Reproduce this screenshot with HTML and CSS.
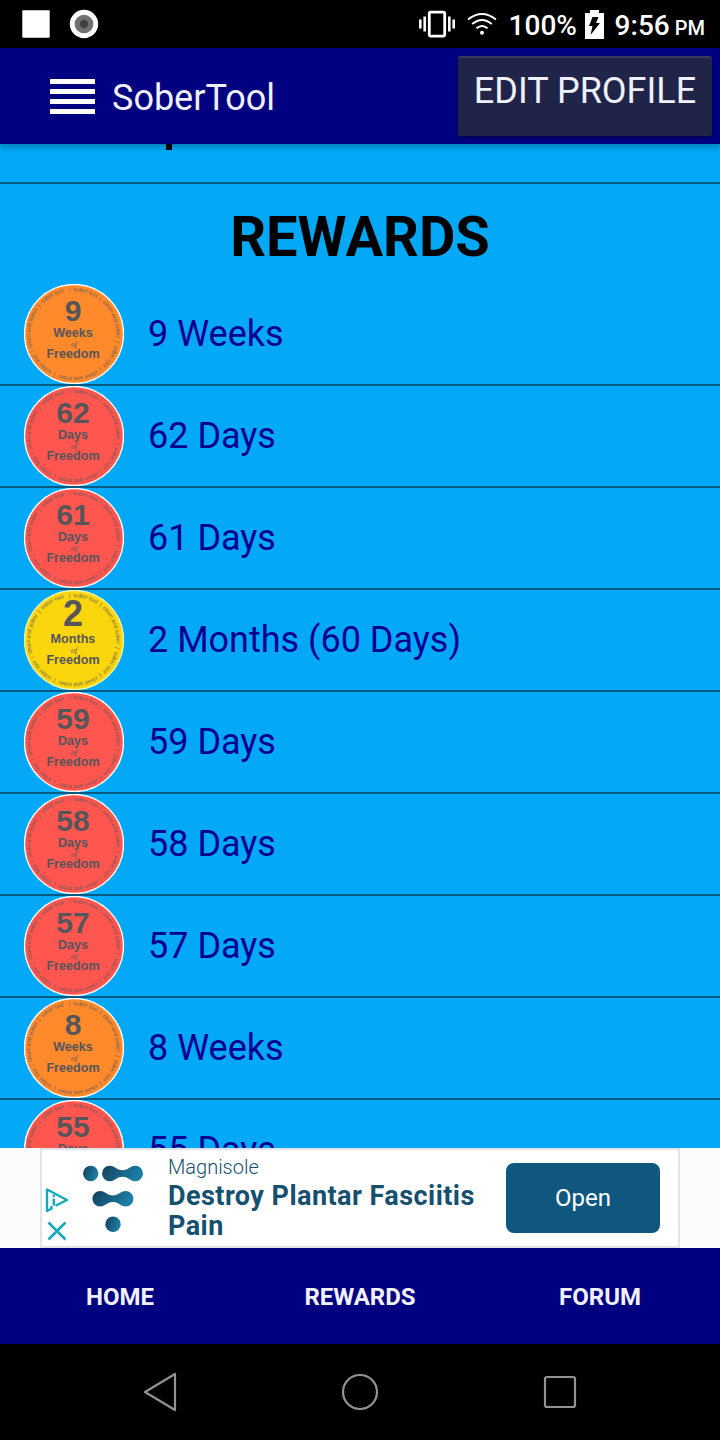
FILE: index.html
```html
<!DOCTYPE html>
<html lang="en">
<head>
    <meta charset="UTF-8">
    <meta name="viewport" content="width=device-width, initial-scale=1.0">
    <title>SoberTool</title>
    <link rel="stylesheet" href="styles.css">
</head>
<body>
    <div class="status-bar">
        <svg class="status-left" width="120" height="48" viewBox="0 0 120 48">
            <rect x="22.3" y="10.2" width="27.4" height="27.6" rx="1" fill="#fff"/>
            <circle cx="84" cy="24" r="14.2" fill="#fff"/>
            <circle cx="84" cy="24" r="9.3" fill="#707070"/>
            <circle cx="84" cy="24" r="4.2" fill="#404040"/>
        </svg>
        <div class="status-right">
            <svg class="vibrate" width="36" height="28" viewBox="0 0 36 28" fill="#fff">
                <rect x="10.3" y="2.1" width="15.4" height="24" rx="1.5" fill="none" stroke="#fff" stroke-width="2.8"/>
                <rect x="0" y="9.5" width="2.6" height="9"/>
                <rect x="4.4" y="6.5" width="2.6" height="15"/>
                <rect x="29" y="6.5" width="2.6" height="15"/>
                <rect x="33.4" y="9.5" width="2.6" height="9"/>
            </svg>
            <svg class="wifi" width="30" height="24" viewBox="0 0 30 24" fill="none" stroke="#fff" stroke-width="1.9">
                <path d="M1 7.5Q15 -3.5 29 7.5"/>
                <path d="M5.2 12Q15 3.8 24.8 12"/>
                <path d="M9.5 16.3Q15 11.5 20.5 16.3"/>
                <circle cx="15" cy="20.7" r="2" fill="#fff" stroke="none"/>
            </svg>
            <span class="percent">100%</span>
            <svg class="battery" width="19" height="30" viewBox="0 0 19 30">
                <path d="M5 1h9v3h5v26H0V4h5z" fill="#fff"/>
                <path d="M7.5 8h6l-2.5 6h4L5.5 26l2-9H4z" fill="#000"/>
            </svg>
            <span class="time">9:56</span>
            <span class="meridiem">PM</span>
        </div>
    </div>

    <header class="app-bar">
        <div class="menu-icon">
            <span></span>
            <span></span>
            <span></span>
            <span></span>
        </div>
        <h1 class="app-title">SoberTool</h1>
        <button class="edit-button">EDIT PROFILE</button>
    </header>

    <main class="content">
        <div class="previous-item"><span></span></div>
        <h2 class="page-title">REWARDS</h2>
        <ul id="rewards" class="rewards"></ul>
    </main>

    <div class="ad-banner">
        <div class="ad">
            <div class="ad-controls">
                <svg width="24" height="26" viewBox="0 0 24 26" fill="none" stroke="#14a9bb" stroke-width="2.4" stroke-linejoin="round">
                    <path d="M10.5 18.8L22 13L2 2.5V24L6.5 21.7V19"/>
                    <path d="M8.8 11.5V18.5M8.8 7.8V10"/>
                </svg>
                <svg width="20" height="20" viewBox="0 0 20 20" fill="none" stroke="#14a9bb" stroke-width="2.6">
                    <path d="M1.5 1.5L18.5 18.5M18.5 1.5L1.5 18.5"/>
                </svg>
            </div>
            <svg class="ad-logo" width="62" height="68" viewBox="0 0 62 68">
                <defs>
                    <linearGradient id="teal" x1="0" y1="0" x2="1" y2="0.3">
                        <stop offset="0" stop-color="#123f5c"/>
                        <stop offset="1" stop-color="#1b7fa6"/>
                    </linearGradient>
                </defs>
                <g fill="url(#teal)">
                    <circle cx="8.7" cy="8.5" r="7.7"/>
                    <path id="link" d="M27.7 .8C33.5 .8 34 5.3 40.5 5.3S47.5 .8 53.3 .8A7.700 7.700 0 0 1 53.3 16.2C47.5 16.2 47 11.7 40.5 11.7S33.5 16.2 27.7 16.2A7.700 7.700 0 0 1 27.7 .8z"/>
                    <use href="#link" x="-9.6" y="25.3"/>
                    <circle cx="31" cy="59.3" r="7.7"/>
                </g>
            </svg>
            <div class="ad-text">
                <p class="advertiser">Magnisole</p>
                <p class="headline">Destroy Plantar Fasciitis Pain</p>
            </div>
            <button class="open-button">Open</button>
        </div>
    </div>

    <nav class="tabs">
        <a>HOME</a>
        <a>REWARDS</a>
        <a>FORUM</a>
    </nav>

    <div class="system-nav">
        <svg width="40" height="44" viewBox="0 0 40 44"><path d="M35 4V40L5 22z"/></svg>
        <svg width="40" height="44" viewBox="0 0 40 44"><circle cx="20" cy="22" r="17"/></svg>
        <svg width="40" height="44" viewBox="0 0 40 44"><rect x="5" y="7" width="30" height="30" rx="2"/></svg>
    </div>

    <script>
        const rewards = [
            { count: 9, unit: 'Weeks' },
            { count: 62, unit: 'Days' },
            { count: 61, unit: 'Days' },
            { count: 2, unit: 'Months', label: '2 Months (60 Days)' },
            { count: 59, unit: 'Days' },
            { count: 58, unit: 'Days' },
            { count: 57, unit: 'Days' },
            { count: 8, unit: 'Weeks' },
            { count: 55, unit: 'Days' }
        ];

        // wording that runs round the edge of every medallion
        const gap = '&nbsp; | &nbsp;';
        const s = 'sober tool' + gap;
        const c = 'clean and sober' + gap;
        const ringText = '| &nbsp;' + s + c + s + c + s + c + 'sober tool';

        document.getElementById('rewards').innerHTML = rewards.map((reward, i) => `
            <li class="reward">
                <svg class="badge ${reward.unit.toLowerCase()}" width="100" height="100" viewBox="0 0 100 100">
                    <circle class="disc" cx="50" cy="50" r="49.5"/>
                    <path id="ring${i}" d="M45 7.300A43 43 0 1 1 44.900 7.310" fill="none"/>
                    <text class="ring"><textPath href="#ring${i}" textLength="264">${ringText}</textPath></text>
                    <text class="count" x="49" y="${reward.unit === 'Months' ? 36 : 36.5}">${reward.count}</text>
                    <text class="unit" x="49" y="52.5">${reward.unit}</text>
                    <text class="of" x="50" y="63">of</text>
                    <text class="freedom" x="49" y="73.5">Freedom</text>
                </svg>
                <span class="reward-name">${reward.label || reward.count + ' ' + reward.unit}</span>
            </li>
        `).join('');
    </script>
</body>
</html>
```

FILE: styles.css
```css
* {
    margin: 0;
    padding: 0;
    box-sizing: border-box;
}

body {
    font-family: Roboto, sans-serif;
    width: 720px;
    height: 1440px;
    overflow: hidden;
    background: #000;
    display: flex;
    flex-direction: column;
}

svg {
    display: block;
    flex-shrink: 0;
}

.status-bar {
    height: 48px;
    flex-shrink: 0;
    display: flex;
    justify-content: space-between;
    color: #fff;
}

.status-right {
    display: flex;
    align-items: center;
    padding-right: 15px;
    font-size: 28px;
    font-weight: 500;
    line-height: 48px;
}

.wifi {
    margin-left: 12px;
}

.percent {
    width: 68px;
    margin-left: 12px;
    padding-top: 3px;
}

.battery {
    margin-left: 8px;
}

.time {
    margin-left: 11px;
    padding-top: 3px;
}

.meridiem {
    margin-left: 5px;
    padding-top: 7px;
    font-size: 20px;
}

.app-bar {
    height: 96px;
    flex-shrink: 0;
    display: flex;
    align-items: center;
    padding: 0 8px 0 50px;
    background: #000080;
    color: #f0f0fa;
    box-shadow: 0 1px 8px rgba(0, 0, 0, 0.4);
    z-index: 1;
}

.menu-icon {
    width: 45px;
    display: flex;
    flex-direction: column;
    gap: 5px;
}

.menu-icon span {
    height: 5px;
    background: #fff;
}

.app-title {
    margin-left: 17px;
    padding-top: 3px;
    font-size: 36px;
    font-weight: 400;
}

.edit-button {
    width: 254px;
    height: 80px;
    margin-left: auto;
    padding-bottom: 12px;
    border: none;
    border-top: 2px solid #363a62;
    border-radius: 3px;
    background: #1f2448;
    box-shadow: 0 1px 3px rgba(0, 0, 0, 0.6);
    color: #f0f0fa;
    font-family: inherit;
    font-size: 36px;
    white-space: nowrap;
}

.content {
    height: 1004px;
    flex-shrink: 0;
    overflow: hidden;
    background: #03a9f6;
}

.previous-item {
    height: 40px;
    padding-left: 166px;
    border-bottom: 2px solid #085a82;
}

.previous-item span {
    display: block;
    width: 6px;
    height: 6px;
    background: #000010;
}

.page-title {
    height: 100px;
    padding-top: 3px;
    line-height: 100px;
    text-align: center;
    font-size: 56px;
    font-weight: 700;
    color: #000;
}

.rewards {
    list-style: none;
}

.reward {
    height: 102px;
    display: flex;
    align-items: center;
    padding-left: 24px;
    border-bottom: 2px solid #085a82;
}

.reward-name {
    margin-left: 24px;
    font-size: 36px;
    color: #000091;
}

.badge text {
    font-family: "Liberation Sans", Arial, sans-serif;
    font-weight: 700;
    text-anchor: middle;
    fill: #55555a;
}

.badge .disc {
    stroke: #fff;
    stroke-width: 1.4px;
}

.weeks .disc {
    fill: #ff8a2b;
}

.days .disc {
    fill: #ff574f;
}

.months .disc {
    fill: #fcd60c;
    stroke: #f0f5a8;
}

.badge .ring {
    font-size: 5.6px;
    font-weight: 400;
    text-anchor: start;
    opacity: 0.85;
}

.badge .count {
    font-size: 30px;
}

.months .count {
    font-size: 36px;
}

.badge .unit {
    font-size: 12.6px;
}

.badge .of {
    font-family: "Liberation Serif", serif;
    font-size: 8px;
    font-style: italic;
    font-weight: 400;
}

.badge .freedom {
    font-size: 12.6px;
}

.ad-banner {
    height: 100px;
    flex-shrink: 0;
    padding: 0 40px;
    background: #fcfcfc;
}

.ad {
    height: 100px;
    display: flex;
    padding-right: 18px;
    border: 2px solid #dfe4ea;
    background: #fff;
}

.ad-controls {
    width: 24px;
    margin: 37px 0 0 3px;
    display: flex;
    flex-direction: column;
    align-items: center;
    gap: 8px;
}

.ad-logo {
    margin: 15px 0 0 13px;
}

.ad-text {
    width: 330px;
    margin: 4px 0 0 24px;
    color: #15506f;
}

.advertiser {
    font-size: 20px;
    font-weight: 300;
    line-height: 27px;
}

.headline {
    font-size: 27px;
    font-weight: 700;
    line-height: 30px;
    letter-spacing: 0.45px;
}

.open-button {
    width: 154px;
    height: 70px;
    margin: 13px 0 0 auto;
    border: none;
    border-radius: 8px;
    background: #10577f;
    color: #fff;
    font-family: inherit;
    font-size: 24px;
}

.tabs {
    height: 96px;
    flex-shrink: 0;
    display: flex;
    background: #000080;
}

.tabs a {
    flex: 1;
    padding-top: 1px;
    line-height: 96px;
    text-align: center;
    font-size: 24px;
    font-weight: 700;
    color: #f0f0fa;
}

.system-nav {
    height: 96px;
    flex-shrink: 0;
    display: flex;
    align-items: center;
    justify-content: space-between;
    padding: 0 140px;
}

.system-nav svg {
    fill: none;
    stroke: #939393;
    stroke-width: 2.2px;
    stroke-linejoin: round;
}
```
